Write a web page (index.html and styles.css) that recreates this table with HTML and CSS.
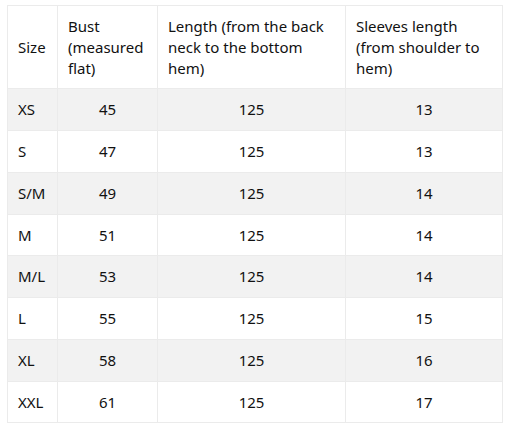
FILE: index.html
```html
<!DOCTYPE html>
<html>
<head>
<meta charset="utf-8">
<link rel="stylesheet" href="styles.css">
</head>
<body>
<div class="wrap">
<table class="sizes">
<colgroup><col class="c1"><col class="c2"><col class="c3"><col class="c4"></colgroup>
<thead>
<tr><th>Size</th><th>Bust (measured flat)</th><th>Length (from the back neck to the bottom hem)</th><th>Sleeves length (from shoulder to hem)</th></tr>
</thead>
<tbody>
<tr><td>XS</td><td>45</td><td>125</td><td>13</td></tr>
<tr><td>S</td><td>47</td><td>125</td><td>13</td></tr>
<tr><td>S/M</td><td>49</td><td>125</td><td>14</td></tr>
<tr><td>M</td><td>51</td><td>125</td><td>14</td></tr>
<tr><td>M/L</td><td>53</td><td>125</td><td>14</td></tr>
<tr><td>L</td><td>55</td><td>125</td><td>15</td></tr>
<tr><td>XL</td><td>58</td><td>125</td><td>16</td></tr>
<tr><td>XXL</td><td>61</td><td>125</td><td>17</td></tr>
</tbody>
</table>
</div>
</body>
</html>
```
FILE: styles.css
```css
html, body { margin: 0; padding: 0; background: #fff; }
.wrap { padding: 5px 6px 0 7px; }
.sizes {
  width: 495px;
  table-layout: fixed;
  border-collapse: collapse;
  font-family: "Noto Sans", "Open Sans", sans-serif;
  font-size: 15px;
  line-height: 20.75px;
  color: #111;
}
.c1 { width: 50px; }
.c2 { width: 100px; }
.c3 { width: 188px; }
.c4 { width: 157px; }
.sizes th, .sizes td {
  border: 1px solid #ebebeb;
  padding: 10px 10px;
  font-weight: normal;
  text-align: left;
  vertical-align: middle;
}
.sizes td { text-align: center; }
.sizes td:first-child { text-align: left; }
.sizes tbody tr:nth-child(odd) td { background: #f2f2f2; }
```
